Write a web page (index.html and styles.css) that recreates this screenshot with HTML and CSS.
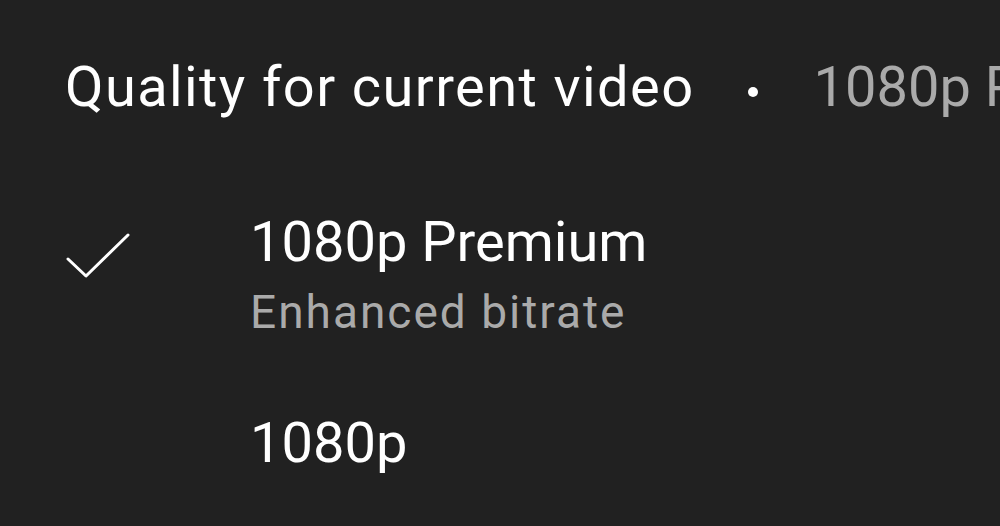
FILE: index.html
```html
<html>

<head>
  <title>Quality</title>
  <link rel="stylesheet" href="styles.css">
</head>

<body>

  <div class="sheet">
    <div class="header">
      <span class="header-title">Quality for current video</span>
      <span class="dot"></span>
      <span class="header-value">1080p Premium</span>
    </div>

    <div class="options">
      <div class="option selected">
        <div class="mark">
          <svg width="76" height="56" viewBox="0 0 76 56">
            <polyline points="8,31 26,48 68,7" fill="none" stroke="#fff" stroke-width="3" stroke-linecap="round" stroke-linejoin="round" />
          </svg>
        </div>
        <div class="label">
          <div class="label-title">1080p Premium</div>
          <div class="label-sub">Enhanced bitrate</div>
        </div>
      </div>

      <div class="option">
        <div class="mark"></div>
        <div class="label">
          <div class="label-title">1080p</div>
        </div>
      </div>
    </div>
  </div>

</body>

</html>
```

FILE: styles.css
```css
:root {
  --background: #212121;
  --text: #ffffff;
  --muted: #aaaaaa;
}

* {
  margin: 0;
  padding: 0;
  box-sizing: border-box;
  font-family: Roboto, "Liberation Sans", sans-serif;
}

body {
  background: var(--background);
  color: var(--text);
  width: 1000px;
  height: 526px;
  overflow: hidden;
}

.sheet {
  padding-top: 54px;
}

.header {
  display: flex;
  align-items: center;
  padding-left: 65px;
  font-size: 56px;
  line-height: 67px;
  white-space: nowrap;
  overflow: hidden;
}

.header-title {
  letter-spacing: 1.4px;
  flex-shrink: 0;
}

.dot {
  flex-shrink: 0;
  width: 10px;
  height: 10px;
  border-radius: 50%;
  background: var(--text);
  margin: 8px 55px 0 54px;
}

.header-value {
  flex-shrink: 0;
  color: var(--muted);
}

.options {
  display: flex;
  flex-direction: column;
  gap: 70px;
  margin-top: 88px;
}

.option {
  display: flex;
}

.mark {
  width: 250px;
  flex-shrink: 0;
  padding: 19px 0 0 60px;
}

.mark svg {
  display: block;
}

.label-title {
  font-size: 56px;
  line-height: 67px;
}

.label-sub {
  font-size: 46px;
  line-height: 55px;
  margin-top: 9px;
  letter-spacing: 2px;
  color: var(--muted);
}
```
